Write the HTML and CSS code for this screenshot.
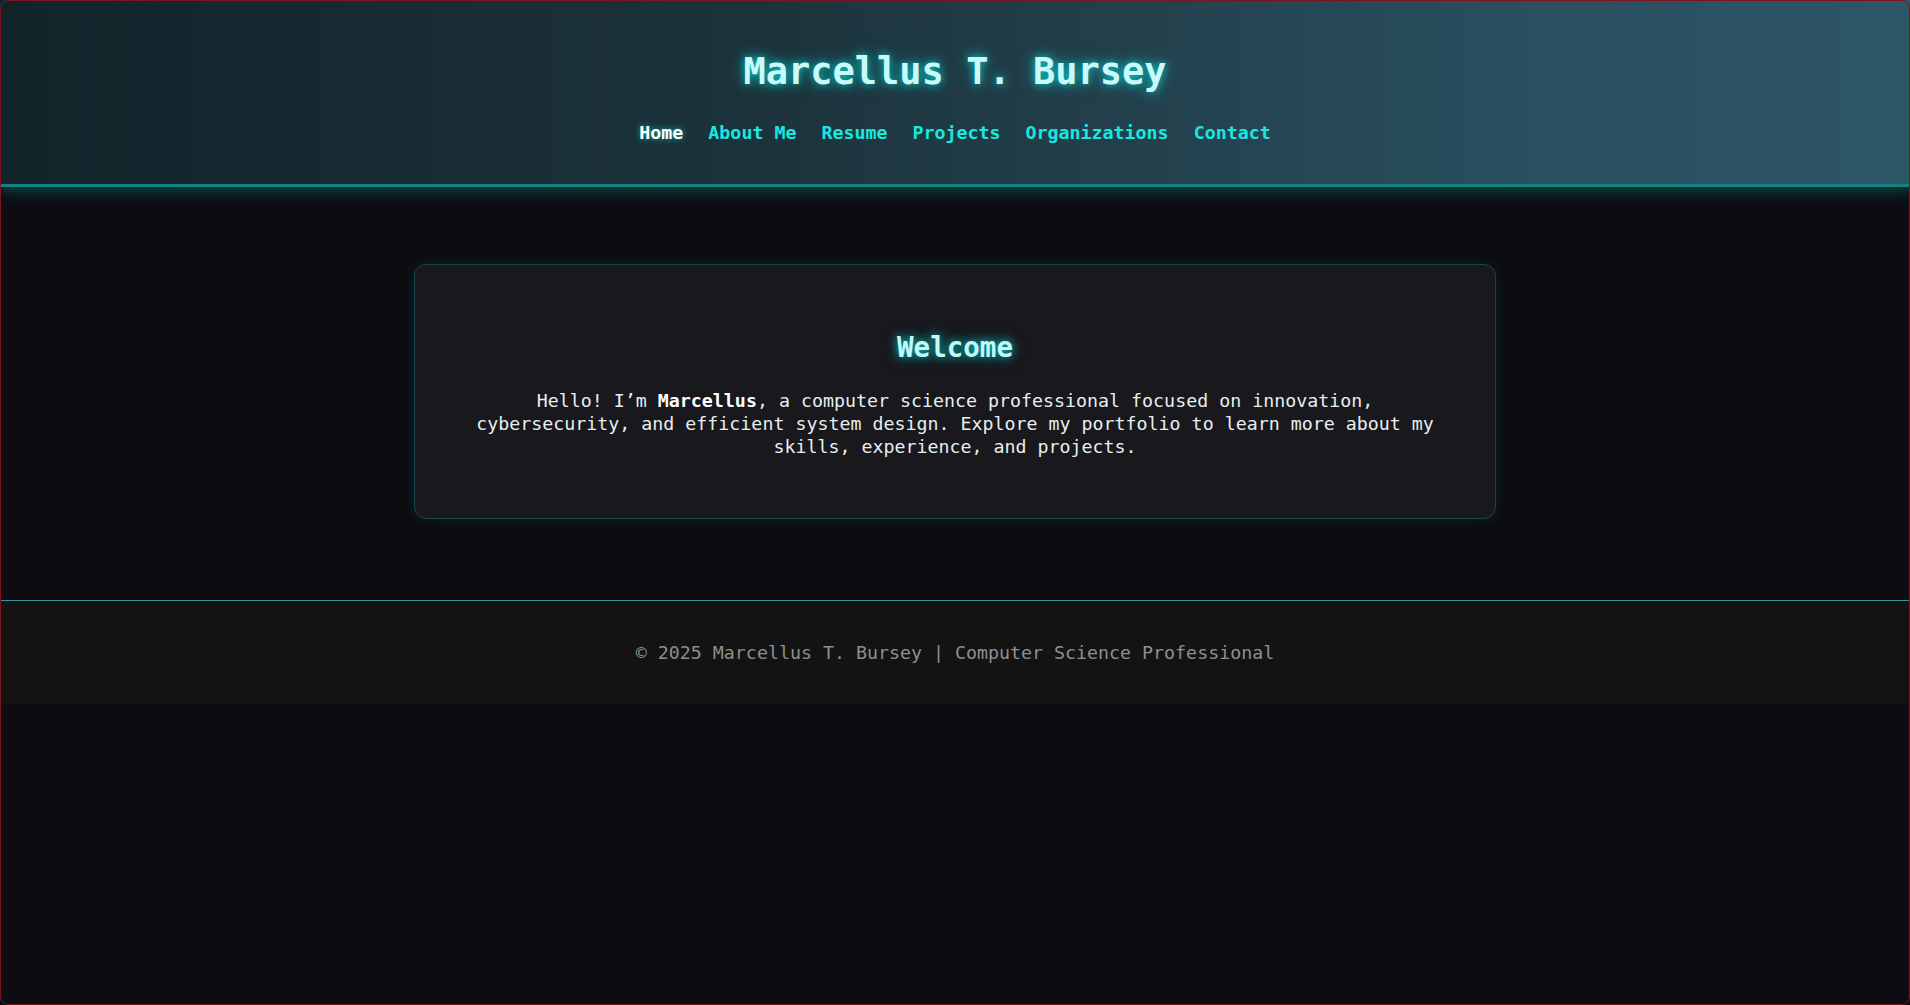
FILE: index.html
```html
<!DOCTYPE html>
<html lang="en">
<head>
<meta charset="utf-8">
<title>Marcellus T. Bursey</title>
<link rel="stylesheet" href="styles.css">
</head>
<body>
<div class="frame"></div>
<header class="site-header">
  <h1 class="site-title">Marcellus T. Bursey</h1>
  <nav class="site-nav">
    <a class="nav-link active" href="#">Home</a>
    <a class="nav-link" href="#">About Me</a>
    <a class="nav-link" href="#">Resume</a>
    <a class="nav-link" href="#">Projects</a>
    <a class="nav-link" href="#">Organizations</a>
    <a class="nav-link" href="#">Contact</a>
  </nav>
</header>
<main class="main">
  <section class="card">
    <h2 class="card-title">Welcome</h2>
    <p class="card-text">Hello! I’m <strong>Marcellus</strong>, a computer science professional focused on innovation, cybersecurity, and efficient system design. Explore my portfolio to learn more about my skills, experience, and projects.</p>
  </section>
</main>
<footer class="site-footer">
  <p class="footer-text">© 2025 Marcellus T. Bursey | Computer Science Professional</p>
</footer>
</body>
</html>
```
FILE: styles.css
```css
html, body {
  margin: 0;
  padding: 0;
}
body {
  background: #0c0c11;
  color: #e4eeee;
  font-family: "DejaVu Sans Mono", "Liberation Mono", monospace;
  font-size: 18.3px;
  min-height: 1005px;
}
.frame {
  position: fixed;
  inset: 0;
  border: 1px solid #7d1422;
  border-radius: 8px;
  pointer-events: none;
  z-index: 10;
}
.site-header {
  background: linear-gradient(90deg, #13232a 0%, #1c333b 40%, #2a4f5f 80%, #2d5667 100%);
  border-bottom: 3px solid #11837f;
  box-shadow: 0 4px 14px rgba(0, 210, 200, 0.32);
  padding: 50px 0 40px;
  text-align: center;
  position: relative;
}
.site-title {
  margin: 0;
  font-size: 37px;
  line-height: 44px;
  font-weight: bold;
  color: #c8fafa;
  text-shadow: 0 0 8px rgba(0, 230, 230, 0.8), 0 0 18px rgba(0, 220, 220, 0.45);
}
.site-nav {
  margin-top: 27px;
  display: flex;
  justify-content: center;
  gap: 25px;
  line-height: 23px;
}
.nav-link {
  color: #19e8e0;
  font-weight: bold;
  text-decoration: none;
}
.nav-link.active {
  color: #ffffff;
  text-shadow: 0 0 6px rgba(0, 230, 230, 0.7);
}
.main {
  padding: 77px 0 81px;
  display: flex;
  justify-content: center;
}
.card {
  width: 980px;
  padding: 50px;
  background: #18181d;
  border: 1px solid #1b4448;
  border-radius: 12px;
  box-shadow: 0 0 14px rgba(0, 200, 200, 0.12);
  text-align: center;
}
.card-title {
  margin: 14px 0 24px;
  font-size: 27.5px;
  line-height: 36px;
  font-weight: bold;
  color: #c4f8f8;
  text-shadow: 0 0 8px rgba(0, 230, 230, 0.8), 0 0 16px rgba(0, 220, 220, 0.4);
}
.card-text {
  margin: 0 0 10px;
  line-height: 23px;
  color: #e6efef;
}
.card-text strong {
  color: #ffffff;
}
.site-footer {
  background: #131313;
  border-top: 1px solid #3a9396;
  padding: 40px 0;
  text-align: center;
}
.footer-text {
  margin: 0;
  line-height: 23px;
  color: #8f8f8f;
}
```
